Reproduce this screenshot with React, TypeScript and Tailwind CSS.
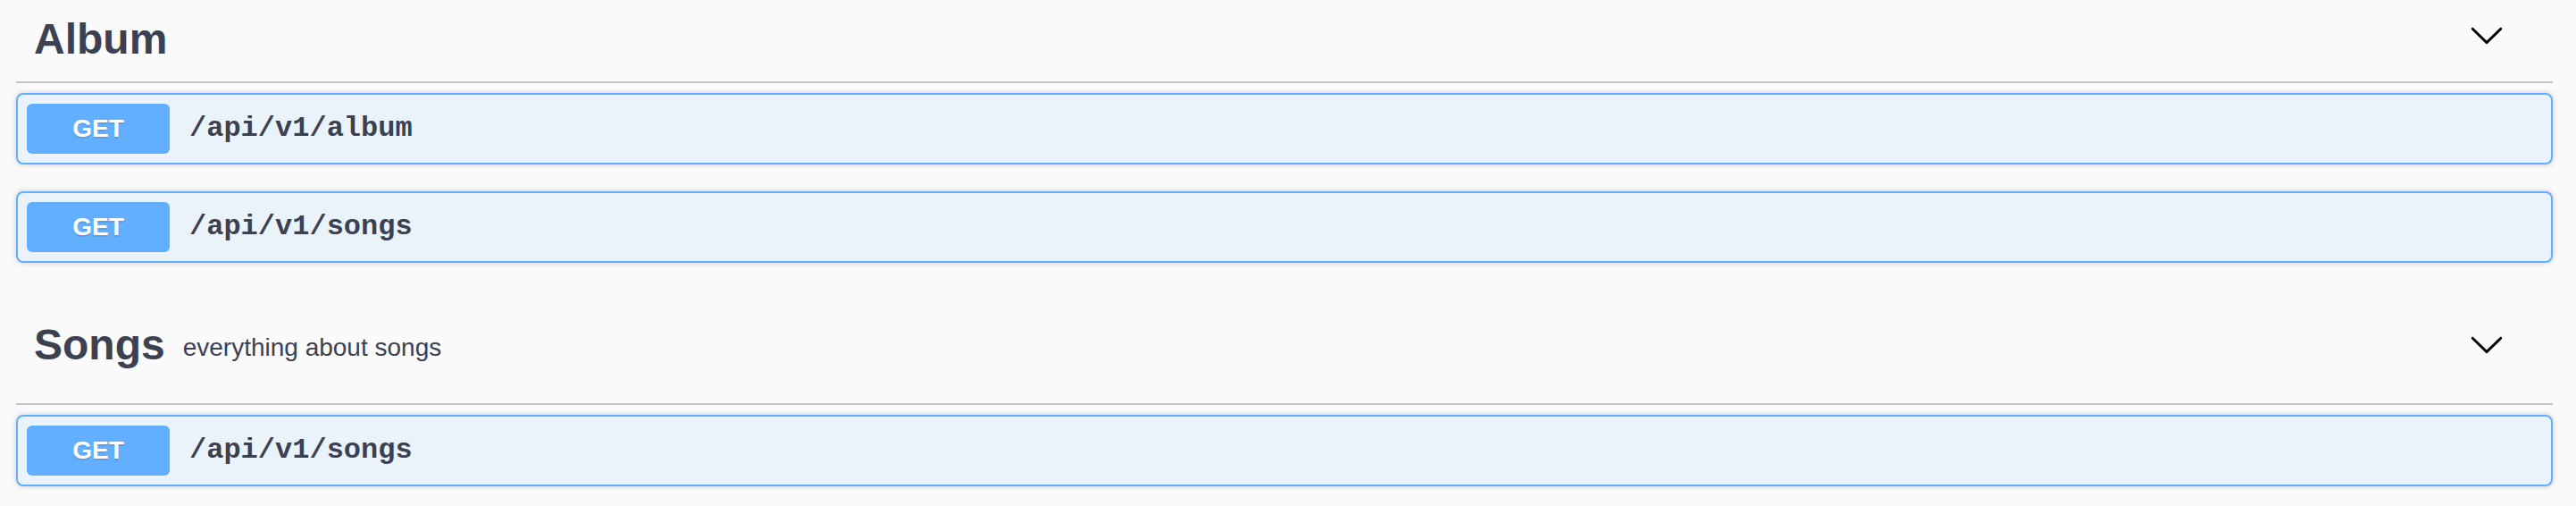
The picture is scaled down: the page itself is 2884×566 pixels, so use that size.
import React from "react";

function Chevron({ className }: { className?: string }) {
  return (
    <svg
      width="40"
      height="40"
      viewBox="0 0 20 20"
      className={className}
      aria-hidden="true"
    >
      <path
        fill="#000"
        d="M17.418 6.109c.272-.268.709-.268.979 0s.271.701 0 .969l-7.908 7.83c-.27.268-.707.268-.979 0l-7.908-7.83c-.27-.268-.27-.701 0-.969.271-.268.709-.268.979 0L10 13.25l7.418-7.141z"
      />
    </svg>
  );
}

function Op({ path, className }: { path: string; className?: string }) {
  return (
    <div
      className={
        "box-border flex h-[80px] items-center rounded-[8px] border-2 border-[#61affe] bg-[#ebf3fa] px-[10px] shadow-[0_0_6px_rgba(0,0,0,0.19)] " +
        (className ?? "")
      }
    >
      <div className="flex h-[56px] w-[160px] items-center justify-center rounded-[6px] bg-[#61affe] font-['Liberation_Sans',Arial,sans-serif] text-[28px] font-bold leading-none text-white [text-shadow:0_2px_0_rgba(0,0,0,0.1)]">
        GET
      </div>
      <div className="ml-[22px] font-['Liberation_Mono','Courier_New',monospace] text-[32px] font-bold leading-none text-[#3b4151]">
        {path}
      </div>
    </div>
  );
}

export default function App() {
  return (
    <div className="min-h-[566px] bg-[#fafafa] pl-[18px] pr-[26px] font-['Liberation_Sans',Arial,sans-serif] text-[#3b4151]">
      {/* Album section */}
      <section className="flex flex-col">
        <div className="box-border flex h-[93px] items-center border-b-2 border-[#c4c6cb] pb-[4px] pl-[20px] pr-[54px]">
          <h4 className="text-[48px] font-bold leading-[56px] text-[#3b4151]">
            Album
          </h4>
          <div className="flex-1" />
          <Chevron className="mb-[9px]" />
        </div>
        <Op path="/api/v1/album" className="mt-[11px]" />
        <Op path="/api/v1/songs" className="mt-[30px]" />
      </section>

      {/* Songs section */}
      <section className="mt-[30px] flex flex-col">
        <div className="box-border flex h-[129px] items-center border-b-2 border-[#c4c6cb] pb-[4px] pl-[20px] pr-[54px]">
          <h4 className="text-[48px] font-bold leading-[56px] text-[#3b4151]">
            Songs
          </h4>
          <span className="mt-[6px] pl-[20px] text-[28px] font-normal leading-[32px] text-[#3b4151]">
            everything about songs
          </span>
          <div className="flex-1" />
          <Chevron className="mb-[1px]" />
        </div>
        <Op path="/api/v1/songs" className="mt-[11px]" />
      </section>
    </div>
  );
}
